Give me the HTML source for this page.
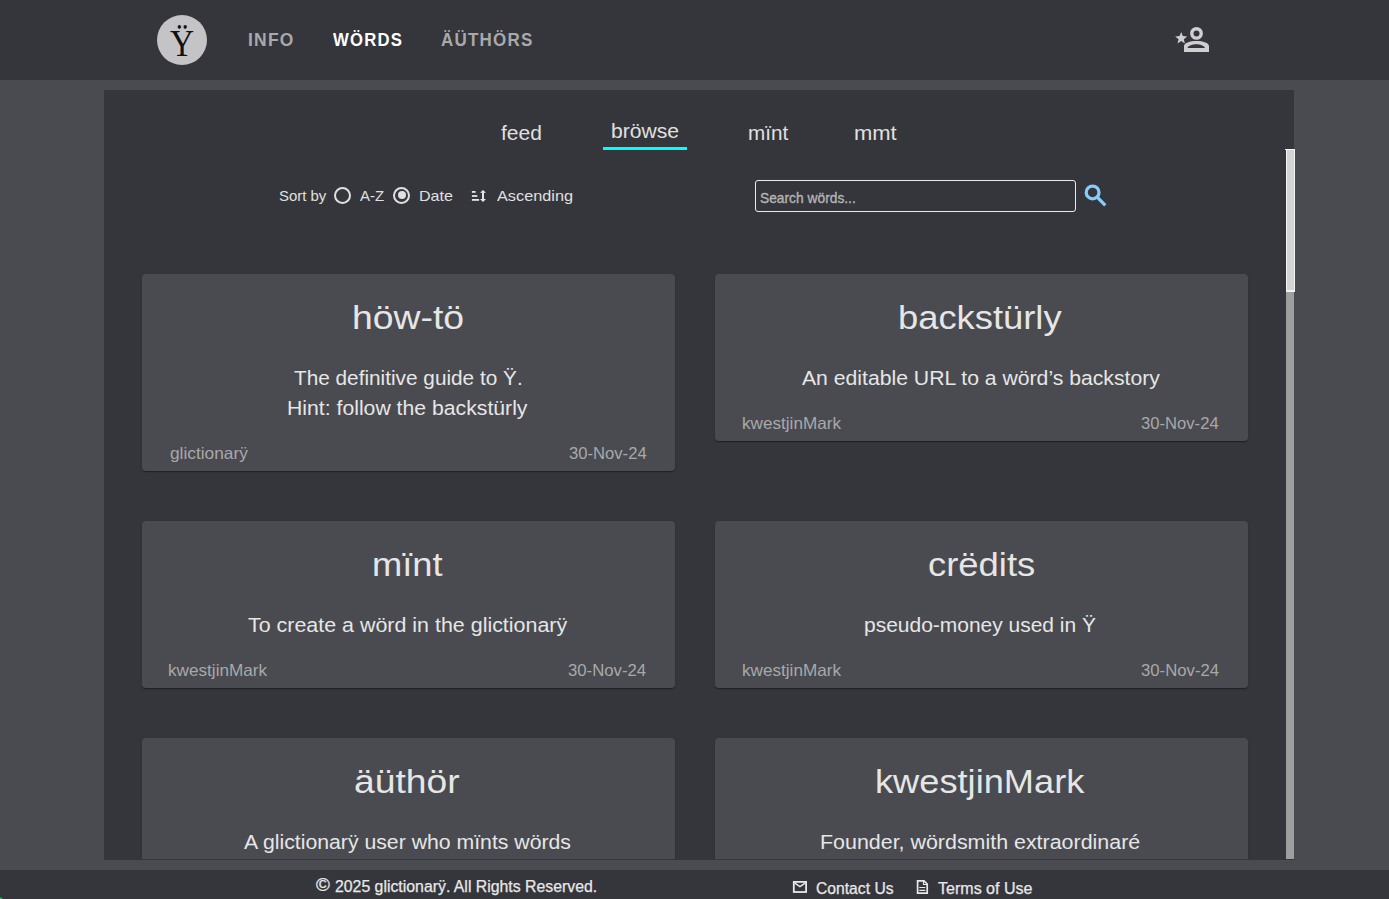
<!DOCTYPE html>
<html><head><meta charset="utf-8">
<style>
*{margin:0;padding:0;box-sizing:border-box}
html,body{width:1389px;height:899px;overflow:hidden}
body{background:#4a4b50;font-family:"Liberation Sans",sans-serif;position:relative;color:#e6e6e6}
.t{position:absolute;white-space:nowrap;transform-origin:0 0}
#hdr{position:absolute;left:0;top:0;width:1389px;height:80px;background:#35363b}
#logo{position:absolute;left:157px;top:15px;width:50px;height:50px;border-radius:50%;background:#c4c4c6}
#logo span{position:absolute;left:0;width:50px;text-align:center;top:10px;font-family:"Liberation Serif",serif;font-size:37px;line-height:37px;color:#111;transform:scaleX(0.9)}
#panel{position:absolute;left:104px;top:90px;width:1190px;height:769px;background:#35363b;overflow:hidden}
#ind{position:absolute;left:499px;top:57px;width:84px;height:3px;background:#00ffff}
.radio{position:absolute;width:17px;height:17px;border:2px solid #e0e0e0;border-radius:50%}
.radio.on::after{content:"";position:absolute;left:2.5px;top:2.5px;width:8px;height:8px;border-radius:50%;background:#e0e0e0}
#search{position:absolute;left:651px;top:90px;width:321px;height:32px;border:1px solid #ebebeb;border-radius:3px}
.card{position:absolute;width:533px;background:#4a4b50;border-radius:4px;box-shadow:0 2px 1px -1px rgba(0,0,0,.2),0 1px 1px 0 rgba(0,0,0,.14),0 1px 3px 0 rgba(0,0,0,.12)}
#sb{position:absolute;left:1182px;top:59px;width:8px;height:710px;background:#9e9e9e}
#thumb{position:absolute;left:1286px;top:149px;width:9px;height:143px;background:#d4d4d4;border:1px solid #f4f4f4;border-bottom:2px solid #f4f4f4}
#ftr{position:absolute;left:0;top:870px;width:1389px;height:29px;background:#35363b;overflow:hidden}
</style></head><body>
<div id="hdr">
  <div id="logo"><span>Ÿ</span></div>
  <svg style="position:absolute;left:1170px;top:22px" width="44" height="34" viewBox="1170 22 44 34">
    <path fill="#cfcfd1" d="M1181.2 32l1.6 4.1 4.4.3-3.4 2.8 1.1 4.3-3.7-2.4-3.7 2.4 1.1-4.3-3.4-2.8 4.4-.3z"/>
    <circle cx="1196.5" cy="33.4" r="4.7" fill="none" stroke="#cfcfd1" stroke-width="3.4"/>
    <path fill="#cfcfd1" fill-rule="evenodd" d="M1184 52v-6c0-3 6-5 12.5-5s12.5 2 12.5 5v6zM1187.5 48h17.5c-1-2.5-5-3.7-8.75-3.7s-7.75 1.2-8.75 3.7z"/>
  </svg>
</div>
<div id="panel">
  <div id="ind"></div>
  <div class="radio" style="left:229.5px;top:96.5px"></div>
  <div class="radio on" style="left:289px;top:96.5px"></div>
  <svg style="position:absolute;left:366px;top:99px" width="18" height="15" viewBox="0 0 18 15">
    <g fill="#e6e6e6"><rect x="1.9" y="2" width="3.7" height="1.8"/><rect x="1.9" y="6.1" width="5.4" height="1.8"/><rect x="1.9" y="10" width="7.2" height="1.8"/>
    <path d="M13 0.9L16 3.7H14V10.1H16L13 13L10 10.1H12V3.7H10z"/></g>
  </svg>
  <div id="search"></div>
  <svg style="position:absolute;left:974px;top:90px" width="34" height="30" viewBox="0 0 34 30">
    <circle cx="14.6" cy="12.45" r="6.4" fill="none" stroke="#85cdfb" stroke-width="3.2"/>
    <path d="M19.2 17.2L27.3 25.3" stroke="#85cdfb" stroke-width="3.3"/>
  </svg>
  <div class="card" style="left:38px;top:184px;height:197px"></div>
  <div class="card" style="left:611px;top:184px;height:167px"></div>
  <div class="card" style="left:38px;top:431px;height:167px"></div>
  <div class="card" style="left:611px;top:431px;height:167px"></div>
  <div class="card" style="left:38px;top:648px;height:167px"></div>
  <div class="card" style="left:611px;top:648px;height:167px"></div>
  <div id="sb"></div>
</div>
<div style="position:absolute;left:104px;top:859px;width:1190px;height:1px;background:#35363b"></div>
<div id="thumb"></div><div style="position:absolute;left:1285px;top:149px;width:1px;height:1px;background:#f4f4f4"></div>
<div id="ftr">
  <svg style="position:absolute;left:789px;top:6px" width="22" height="22" viewBox="0 0 22 22">
    <rect x="4.8" y="5.9" width="12.3" height="10.1" fill="none" stroke="#e8e8e8" stroke-width="1.8"/>
    <path d="M5.8 7.1L10.95 10.7L16.1 7.1" fill="none" stroke="#e8e8e8" stroke-width="1.5"/>
  </svg>
  <svg style="position:absolute;left:912px;top:6px" width="20" height="22" viewBox="0 0 20 22">
    <path d="M5.6 4.8H12L15.2 8V17.2H5.6Z" fill="none" stroke="#e8e8e8" stroke-width="1.7" stroke-linejoin="miter"/>
    <path d="M11.5 4.8V8.5H15.2" fill="none" stroke="#e8e8e8" stroke-width="1.2"/>
    <path d="M7.3 11.5H13.3M7.3 14.35H13.3" stroke="#e8e8e8" stroke-width="1.1"/>
  </svg>
  <div style="position:absolute;left:-7.5px;top:26.5px;width:11px;height:11px;border-radius:50%;background:#1db86a"></div>
</div>
<div class="t" id="nav1" style="left:248.00px;top:30.56px;font-size:18px;line-height:18px;font-weight:bold;color:#a9a9ab;transform:scaleX(0.9684);letter-spacing:1.3px">INFO</div>
<div class="t" id="nav2" style="left:333.00px;top:30.56px;font-size:18px;line-height:18px;font-weight:bold;color:#ffffff;transform:scaleX(0.9283);letter-spacing:1.3px">WÖRDS</div>
<div class="t" id="nav3" style="left:440.76px;top:30.56px;font-size:18px;line-height:18px;font-weight:bold;color:#a9a9ab;transform:scaleX(0.9433);letter-spacing:1.3px">ÄÜTHÖRS</div>
<div class="t" id="tab1" style="left:500.79px;top:123.45px;font-size:20.5px;line-height:20.5px;font-weight:normal;color:#e0e0e0;transform:scaleX(1.0256);">feed</div>
<div class="t" id="tab2" style="left:611.48px;top:120.95px;font-size:20.5px;line-height:20.5px;font-weight:normal;color:#e0e0e0;transform:scaleX(1.0308);">bröwse</div>
<div class="t" id="tab3" style="left:748.39px;top:123.45px;font-size:20.5px;line-height:20.5px;font-weight:normal;color:#e0e0e0;transform:scaleX(1.0103);">mïnt</div>
<div class="t" id="tab4" style="left:854.29px;top:123.45px;font-size:20.5px;line-height:20.5px;font-weight:normal;color:#e0e0e0;transform:scaleX(1.0720);">mmt</div>
<div class="t" id="s1" style="left:278.78px;top:187.60px;font-size:15px;line-height:15px;font-weight:normal;color:#e0e0e0;transform:scaleX(0.9958);">Sort by</div>
<div class="t" id="s2" style="left:360.48px;top:187.60px;font-size:15px;line-height:15px;font-weight:normal;color:#e0e0e0;transform:scaleX(1.0004);">A-Z</div>
<div class="t" id="s3" style="left:418.75px;top:187.60px;font-size:15px;line-height:15px;font-weight:normal;color:#e0e0e0;transform:scaleX(1.0710);">Date</div>
<div class="t" id="s4" style="left:497.00px;top:187.60px;font-size:15px;line-height:15px;font-weight:normal;color:#e0e0e0;transform:scaleX(1.0859);">Ascending</div>
<div class="t" id="ph" style="left:760.41px;top:190.64px;font-size:14.6px;line-height:14.6px;font-weight:normal;color:#b4b4b4;transform:scaleX(0.9446);-webkit-text-stroke:0.35px #b4b4b4">Search wörds...</div>
<div class="t" id="c1t" style="left:351.55px;top:300.22px;font-size:34px;line-height:34px;font-weight:normal;color:#e6e6e6;transform:scaleX(1.0990);">höw-tö</div>
<div class="t" id="c2t" style="left:897.54px;top:300.42px;font-size:34px;line-height:34px;font-weight:normal;color:#e6e6e6;transform:scaleX(1.0689);">backstürly</div>
<div class="t" id="c3t" style="left:371.69px;top:546.52px;font-size:34px;line-height:34px;font-weight:normal;color:#e6e6e6;transform:scaleX(1.0677);">mïnt</div>
<div class="t" id="c4t" style="left:927.68px;top:546.52px;font-size:34px;line-height:34px;font-weight:normal;color:#e6e6e6;transform:scaleX(1.0714);">crëdits</div>
<div class="t" id="c5t" style="left:354.35px;top:764.22px;font-size:34px;line-height:34px;font-weight:normal;color:#e6e6e6;transform:scaleX(1.0948);">äüthör</div>
<div class="t" id="c6t" style="left:874.86px;top:764.22px;font-size:34px;line-height:34px;font-weight:normal;color:#e6e6e6;transform:scaleX(1.0656);">kwestjinMark</div>
<div class="t" id="c1d1" style="left:294.48px;top:367.85px;font-size:20.5px;line-height:20.5px;font-weight:normal;color:#e6e6e6;transform:scaleX(1.0134);">The definitive guide to Ÿ.</div>
<div class="t" id="c1d2" style="left:286.97px;top:397.55px;font-size:20.5px;line-height:20.5px;font-weight:normal;color:#e6e6e6;transform:scaleX(1.0345);">Hint: follow the backstürly</div>
<div class="t" id="c2d1" style="left:802.00px;top:367.65px;font-size:20.5px;line-height:20.5px;font-weight:normal;color:#e6e6e6;transform:scaleX(1.0329);">An editable URL to a wörd’s backstory</div>
<div class="t" id="c3d1" style="left:248.47px;top:614.65px;font-size:20.5px;line-height:20.5px;font-weight:normal;color:#e6e6e6;transform:scaleX(1.0452);">To create a wörd in the glictionarÿ</div>
<div class="t" id="c4d1" style="left:864.17px;top:614.65px;font-size:20.5px;line-height:20.5px;font-weight:normal;color:#e6e6e6;transform:scaleX(1.0230);">pseudo-money used in Ÿ</div>
<div class="t" id="c5d1" style="left:244.20px;top:832.45px;font-size:20.5px;line-height:20.5px;font-weight:normal;color:#e6e6e6;transform:scaleX(1.0361);">A glictionarÿ user who mïnts wörds</div>
<div class="t" id="c6d1" style="left:820.33px;top:832.45px;font-size:20.5px;line-height:20.5px;font-weight:normal;color:#e6e6e6;transform:scaleX(1.0446);">Founder, wördsmith extraordinaré</div>
<div class="t" id="c1f1" style="left:169.68px;top:444.83px;font-size:16.5px;line-height:16.5px;font-weight:normal;color:#a8a8aa;transform:scaleX(1.0480);">glictionarÿ</div>
<div class="t" id="c1f2" style="left:569.08px;top:444.83px;font-size:16.5px;line-height:16.5px;font-weight:normal;color:#a8a8aa;transform:scaleX(1.0078);">30-Nov-24</div>
<div class="t" id="c2f1" style="left:741.56px;top:414.83px;font-size:16.5px;line-height:16.5px;font-weight:normal;color:#a8a8aa;transform:scaleX(1.0379);">kwestjinMark</div>
<div class="t" id="c2f2" style="left:1141.48px;top:414.83px;font-size:16.5px;line-height:16.5px;font-weight:normal;color:#a8a8aa;transform:scaleX(1.0081);">30-Nov-24</div>
<div class="t" id="c3f1" style="left:168.46px;top:661.83px;font-size:16.5px;line-height:16.5px;font-weight:normal;color:#a8a8aa;transform:scaleX(1.0400);">kwestjinMark</div>
<div class="t" id="c3f2" style="left:567.88px;top:661.83px;font-size:16.5px;line-height:16.5px;font-weight:normal;color:#a8a8aa;transform:scaleX(1.0133);">30-Nov-24</div>
<div class="t" id="c4f1" style="left:741.56px;top:661.83px;font-size:16.5px;line-height:16.5px;font-weight:normal;color:#a8a8aa;transform:scaleX(1.0379);">kwestjinMark</div>
<div class="t" id="c4f2" style="left:1141.48px;top:661.83px;font-size:16.5px;line-height:16.5px;font-weight:normal;color:#a8a8aa;transform:scaleX(1.0133);">30-Nov-24</div>
<div class="t" id="f0" style="left:315.79px;top:875.12px;font-size:19px;line-height:19px;font-weight:normal;color:#e8e8e8;transform:scaleX(0.9867);-webkit-text-stroke:0.3px #e8e8e8">©</div>
<div class="t" id="f1" style="left:334.54px;top:878.66px;font-size:16px;line-height:16px;font-weight:normal;color:#e8e8e8;transform:scaleX(0.9894);-webkit-text-stroke:0.25px #e8e8e8">2025 glictionarÿ. All Rights Reserved.</div>
<div class="t" id="f2" style="left:816.00px;top:881.46px;font-size:16px;line-height:16px;font-weight:normal;color:#e8e8e8;transform:scaleX(0.9798);-webkit-text-stroke:0.25px #e8e8e8">Contact Us</div>
<div class="t" id="f3" style="left:938.17px;top:881.46px;font-size:16px;line-height:16px;font-weight:normal;color:#e8e8e8;transform:scaleX(1.0023);-webkit-text-stroke:0.25px #e8e8e8">Terms of Use</div>
</body></html>
